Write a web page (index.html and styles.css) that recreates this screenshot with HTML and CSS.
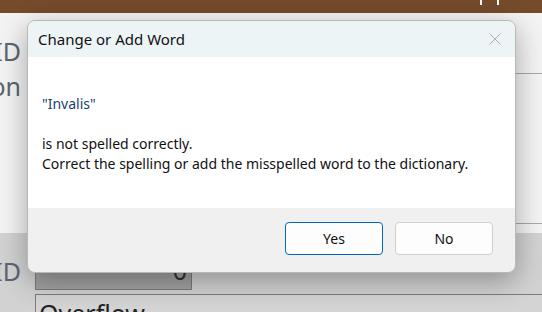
FILE: index.html
```
<!DOCTYPE html>
<html>
<head>
<meta charset="UTF-8">
<title>Change or Add Word</title>
<link rel="stylesheet" href="styles.css">
</head>
<body>
	<div class="app">
		<div class="titlebar">
			<span class="tick"></span>
			<span class="tick"></span>
		</div>
		<div class="panel upper">
			<div class="row first">
				<div class="label">ID</div>
				<div class="line"></div>
			</div>
			<div class="row second">
				<div class="label">on</div>
				<div class="line"></div>
			</div>
		</div>
		<div class="panel lower">
			<div class="row">
				<div class="label">ID</div>
				<div class="textbox small">0</div>
			</div>
			<div class="row">
				<div class="label">on</div>
				<div class="textbox wide">Overflow</div>
			</div>
		</div>
	</div>

	<!-- modal dialog over the app -->
	<div class="dialog">
		<div class="dlg-head">
			<span class="dlg-title">Change or Add Word</span>
			<svg class="dlg-close" width="12" height="12" viewBox="0 0 12 12">
				<path d="M0.5 0.5 L11.5 11.5 M11.5 0.5 L0.5 11.5" stroke="#b0b0b0" stroke-width="1" fill="none"/>
			</svg>
		</div>
		<div class="dlg-body">
			<p class="word">"Invalis"</p>
			<p>&nbsp;</p>
			<p>is not spelled correctly.</p>
			<p>Correct the spelling or add the misspelled word to the dictionary.</p>
		</div>
		<div class="dlg-foot">
			<button class="btn primary">Yes</button>
			<button class="btn">No</button>
		</div>
	</div>
</body>
</html>
```
FILE: styles.css
```
* {
	margin: 0;
	padding: 0;
	box-sizing: border-box;
}
body {
	width: 542px;
	height: 312px;
	overflow: hidden;
	font-family: "Noto Sans", "Open Sans", sans-serif;
	background-color: #d2d2d2;
}
.app {
	width: 542px;
}
.titlebar {
	height: 13px;
	background-color: #744b2b;
	display: flex;
	padding-left: 480px;
	gap: 15px;
}
.tick {
	width: 2px;
	height: 5px;
	background-color: #f4f4f4;
}
.panel.upper {
	height: 220px;
	background-color: #f3f3f3;
}
.row {
	display: flex;
	align-items: flex-start;
}
.label {
	width: 21px;
	flex-shrink: 0;
	display: flex;
	justify-content: flex-end;
	white-space: nowrap;
	font-size: 25px;
	line-height: 30px;
	color: #5b6570;
}
.upper .first {
	padding-top: 23px;
	height: 61px;
}
.upper .second {
	height: 150px;
}
.upper .line {
	flex: 1;
	align-self: flex-end;
	border-bottom: 1px solid #a8a8a8;
	margin-left: 14px;
}
.upper .second .label {
	margin-top: -3px;
}
.lower .row:first-child {
	margin-top: -7px;
	height: 68px;
}
.lower .label {
	margin-top: 30px;
}
.textbox {
	margin-left: 14px;
	border: 1px solid #7c7c7c;
	font-size: 25px;
	line-height: 30px;
	color: #222;
}
.textbox.small {
	width: 157px;
	height: 64px;
	background-color: #a2a2a2;
	text-align: right;
	padding: 28px 4px 0 0;
	color: #333;
}
.textbox.wide {
	flex: 1;
	height: 40px;
	background-color: #d4d4d4;
	padding: 3px 0 0 3px;
	margin-right: -2px;
}

/* dialog */
.dialog {
	position: absolute;
	left: 27px;
	top: 20px;
	width: 489px;
	height: 253px;
	border: 1px solid #b8b8b8;
	border-radius: 8px;
	overflow: hidden;
	background-color: #f0f0f0;
	box-shadow: 0 8px 28px rgba(0, 0, 0, 0.32);
	display: flex;
	flex-direction: column;
}
.dlg-head {
	height: 36px;
	background-color: #edf4f6;
	display: flex;
	align-items: center;
	justify-content: space-between;
	padding: 0 14px 0 10px;
}
.dlg-title {
	font-size: 15px;
	color: #111;
}
.dlg-close {
	display: block;
	margin-top: -1px;
}
.dlg-body {
	height: 151px;
	background-color: #fff;
	padding: 37px 0 0 14px;
	font-size: 14px;
	line-height: 20px;
	color: #111;
}
.dlg-body .word {
	color: #1c3f6e;
}
.dlg-foot {
	flex: 1;
	display: flex;
	justify-content: flex-end;
	gap: 12px;
	padding: 14px 22px 0 0;
}
.btn {
	width: 98px;
	height: 33px;
	border: 1px solid #cfcfcf;
	border-radius: 4px;
	background-color: #fdfdfd;
	font-family: "Noto Sans", "Open Sans", sans-serif;
	font-size: 14px;
	color: #111;
}
.btn.primary {
	border-color: #0067c0;
}
```
